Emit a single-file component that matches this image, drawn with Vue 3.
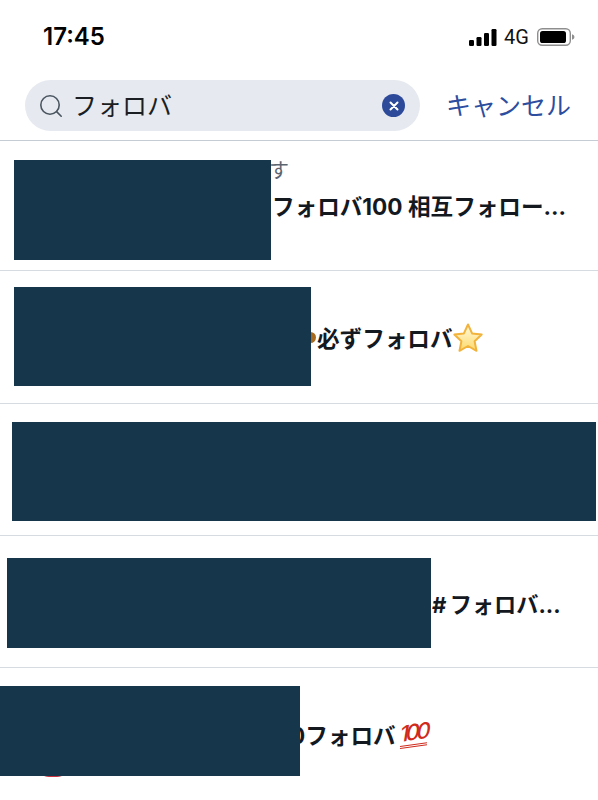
<template>
  <div class="screen">
    <div class="status-bar">
      <span class="time">17:45</span>
      <div class="status-icons">
        <svg class="signal" viewBox="0 0 28 17" fill="#000">
          <rect x="0" y="11" width="5" height="6" rx="1.2" />
          <rect x="7.5" y="8" width="5" height="9" rx="1.2" />
          <rect x="15" y="4" width="5" height="13" rx="1.2" />
          <rect x="22.5" y="0" width="5" height="17" rx="1.2" />
        </svg>
        <span class="network">4G</span>
        <svg class="battery" viewBox="0 0 38 18">
          <rect x="0.7" y="0.7" width="32.6" height="16.6" rx="4.5" fill="none" stroke="#8e8e8e" stroke-width="1.4" />
          <rect x="3" y="3" width="26" height="12" rx="2.6" fill="#000" />
          <path d="M35 6.2c1.5.4 2.4 1.5 2.4 2.8s-.9 2.4-2.4 2.8z" fill="#8e8e8e" />
        </svg>
      </div>
    </div>

    <div class="search-bar">
      <div class="search-box">
        <svg class="search-icon" viewBox="0 0 24 24" fill="none" stroke="#4a5560" stroke-width="1.6">
          <circle cx="11" cy="11" r="9.2" />
          <path d="M17.6 17.6l4.6 4.6" stroke-linecap="round" />
        </svg>
        <span class="query">フォロバ</span>
        <span class="clear-btn">
          <svg viewBox="0 0 10 10" stroke="#fff" stroke-width="2" stroke-linecap="round">
            <path d="M1.5 1.5l7 7M8.5 1.5l-7 7" />
          </svg>
        </span>
      </div>
      <span class="cancel">キャンセル</span>
    </div>

    <div class="results">
      <div class="row row-1">
        <div class="sub">す</div>
        <div class="title">フォロバ100 相互フォロー...</div>
        <div class="cover cover-1"></div>
      </div>
      <div class="row row-2">
        <div class="title">
          <span class="bit"></span>必ずフォロバ<svg class="star" viewBox="0 0 32 32">
            <defs>
              <linearGradient id="starFill" x1="0" y1="0" x2="0" y2="1">
                <stop offset="0" stop-color="#fffbe0" />
                <stop offset="1" stop-color="#fdd96a" />
              </linearGradient>
            </defs>
            <path d="M16 2.5l4.1 8.9 9.6 1.2-7.1 6.6 1.9 9.6L16 24l-8.5 4.8 1.9-9.6-7.1-6.6 9.6-1.2z"
              fill="url(#starFill)" stroke="#f2b33c" stroke-width="2" stroke-linejoin="round" />
          </svg>
        </div>
        <div class="cover cover-2"></div>
      </div>
      <div class="row row-3">
        <div class="cover cover-3"></div>
      </div>
      <div class="row row-4">
        <div class="title"># フォロバ...</div>
        <div class="cover cover-4"></div>
      </div>
      <div class="row row-5">
        <div class="title">0フォロバ<span class="hundred">100</span></div>
        <div class="avatar-edge"></div>
        <div class="cover cover-5"></div>
      </div>
    </div>
  </div>
</template>

<script setup>
</script>

<style>
html,
body {
  margin: 0;
  background: #fff;
}
</style>

<style scoped>
.screen {
  width: 598px;
  height: 800px;
  overflow: hidden;
  background: #fff;
  font-family: Inter, Roboto, "Noto Sans CJK JP", sans-serif;
  color: #14191f;
}

.status-bar {
  height: 80px;
  box-sizing: border-box;
  padding: 23px 23px 0 43px;
  display: flex;
  justify-content: space-between;
  align-items: flex-start;
}

.time {
  font-size: 24px;
  font-weight: 600;
  line-height: 27px;
  color: #000;
}

.status-icons {
  display: flex;
  align-items: center;
  height: 28px;
}

.signal {
  width: 28px;
  height: 17px;
}

.network {
  margin-left: 7px;
  width: 33px;
  font-family: Roboto, sans-serif;
  font-size: 20px;
  color: #111;
}

.battery {
  width: 38px;
  height: 18px;
}

.search-bar {
  display: flex;
  align-items: center;
  height: 51px;
  padding-left: 25px;
}

.search-box {
  width: 395px;
  height: 51px;
  box-sizing: border-box;
  padding: 0 15px 0 14px;
  background: #e6e9ef;
  border-radius: 26px;
  display: flex;
  align-items: center;
}

.search-icon {
  width: 24px;
  height: 24px;
  flex-shrink: 0;
}

.query {
  margin: -4px 0 0 9px;
  font-size: 25px;
  color: #1b1f24;
  flex: 1;
}

.clear-btn {
  width: 23px;
  height: 23px;
  border-radius: 50%;
  background: #2d4a9a;
  display: flex;
  align-items: center;
  justify-content: center;
}

.clear-btn svg {
  width: 10px;
  height: 10px;
}

.cancel {
  margin: -4px 0 0 26px;
  font-size: 25px;
  color: #2d4d9e;
  white-space: nowrap;
}

.results {
  margin-top: 9px;
  border-top: 1px solid #c6ccd3;
}

.row {
  position: relative;
  box-sizing: border-box;
  border-bottom: 1px solid #d6dae1;
  display: flex;
  flex-direction: column;
}

.row-1 {
  height: 130px;
  padding: 17px 0 0 269px;
}

.row-2 {
  height: 133px;
  padding: 51px 0 0 317px;
}

.row-3 {
  height: 132px;
}

.row-4 {
  height: 132px;
  padding: 52px 0 0 432px;
}

.row-5 {
  height: 140px;
  padding: 51px 0 0 290px;
  border-bottom: none;
}

.sub {
  font-size: 20px;
  line-height: 26px;
  color: #5a6570;
}

.title {
  font-size: 22.6px;
  font-weight: 700;
  line-height: 34px;
  white-space: nowrap;
  display: flex;
  align-items: center;
}

.row-1 .title {
  margin: 6px 0 0 3px;
}

.row-4 .title {
  font-size: 22.2px;
  word-spacing: -2px;
}

.bit {
  position: absolute;
  left: 305px;
  top: 61px;
  width: 11px;
  height: 11px;
  border-radius: 50%;
  background: #a86a1c;
}

.star {
  width: 32px;
  height: 32px;
  margin: -2px 0 0 -1px;
}

.hundred {
  margin: -6px 0 0 4px;
  font-size: 22px;
  font-weight: 500;
  font-style: italic;
  letter-spacing: -3.4px;
  line-height: 24px;
  color: #cf2a1c;
  border-bottom: 3px double #cf2a1c;
  transform: skewY(-8deg);
}

.avatar-edge {
  position: absolute;
  left: 38px;
  top: 98px;
  width: 30px;
  height: 11px;
  border-radius: 0 0 15px 15px;
  background: #c8323f;
}

/* blocks lying over the blanked-out content */
.cover {
  position: absolute;
  background: #16374b;
}

.cover-1 {
  left: 14px;
  top: 19px;
  width: 257px;
  height: 100px;
}

.cover-2 {
  left: 14px;
  top: 16px;
  width: 297px;
  height: 99px;
}

.cover-3 {
  left: 12px;
  top: 18px;
  width: 584px;
  height: 99px;
}

.cover-4 {
  left: 7px;
  top: 22px;
  width: 424px;
  height: 90px;
}

.cover-5 {
  left: 0;
  top: 18px;
  width: 300px;
  height: 90px;
}
</style>
